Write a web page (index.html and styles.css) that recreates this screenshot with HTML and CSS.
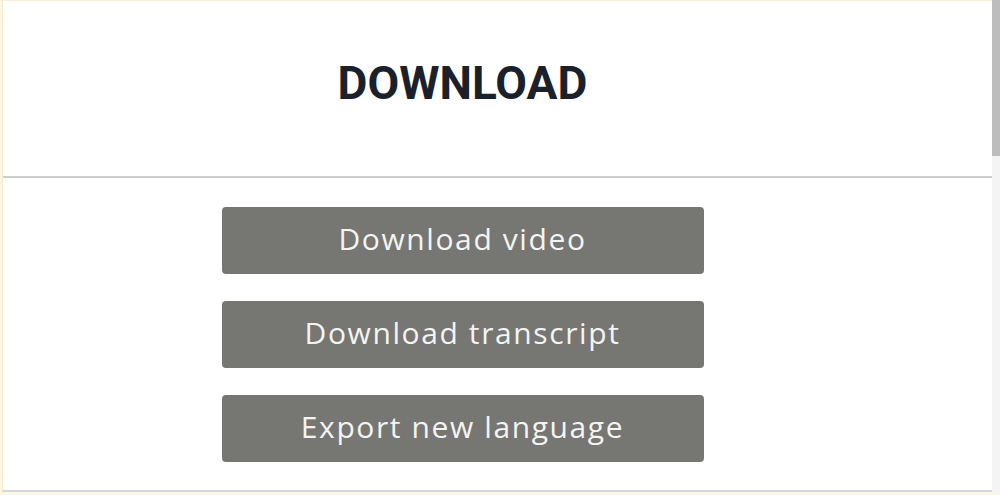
FILE: index.html
```html
<!DOCTYPE html>
<html lang="en">
<head>
<meta charset="utf-8">
<title>Download</title>
<link rel="stylesheet" href="styles.css">
</head>
<body>
<div class="frame">
  <div class="card">
    <header class="card-head">
      <h1 class="title">DOWNLOAD</h1>
    </header>
    <div class="actions">
      <button class="btn">Download video</button>
      <button class="btn">Download transcript</button>
      <button class="btn">Export new language</button>
    </div>
  </div>
  <div class="scrollbar"><div class="thumb"></div></div>
</div>
</body>
</html>
```
FILE: styles.css
```css
html, body {
  margin: 0;
  padding: 0;
}
body {
  width: 1000px;
  height: 495px;
  background: #fbf5e4;
  font-family: "Open Sans", "Liberation Sans", sans-serif;
  overflow: hidden;
}
.frame {
  display: flex;
  height: 492px;
  padding-left: 2px;
  box-sizing: border-box;
}
.card {
  flex: 1;
  background: #fff;
  border-top: 1px solid #f6eed8;
  border-left: 1px solid #f3ead0;
  border-bottom: 2px solid #d6d6d8;
  display: flex;
  flex-direction: column;
  box-sizing: border-box;
}
.card-head {
  height: 175px;
  border-bottom: 2px solid #cdcdcd;
  display: flex;
  align-items: center;
  justify-content: center;
  padding-right: 70px;
}
.title {
  margin: 0;
  font-family: Roboto, "Liberation Sans", sans-serif;
  font-weight: 700;
  font-size: 46px;
  line-height: 1;
  color: #1b212b;
  padding-bottom: 12px;
}
.actions {
  display: flex;
  flex-direction: column;
  align-items: center;
  gap: 27px;
  padding-top: 29px;
  padding-right: 70px;
}
.btn {
  width: 482px;
  height: 67px;
  border: none;
  border-radius: 4px;
  background: #767672;
  color: #f4f4f2;
  font-family: "Open Sans", "Liberation Sans", sans-serif;
  font-size: 30px;
  font-weight: 400;
  letter-spacing: 1.6px;
  padding: 0 0 5px;
  cursor: pointer;
}
.scrollbar {
  width: 8px;
  background: #f4f4f5;
  display: flex;
  flex-direction: column;
}
.thumb {
  height: 156px;
  background: #bdbdbd;
}
```
